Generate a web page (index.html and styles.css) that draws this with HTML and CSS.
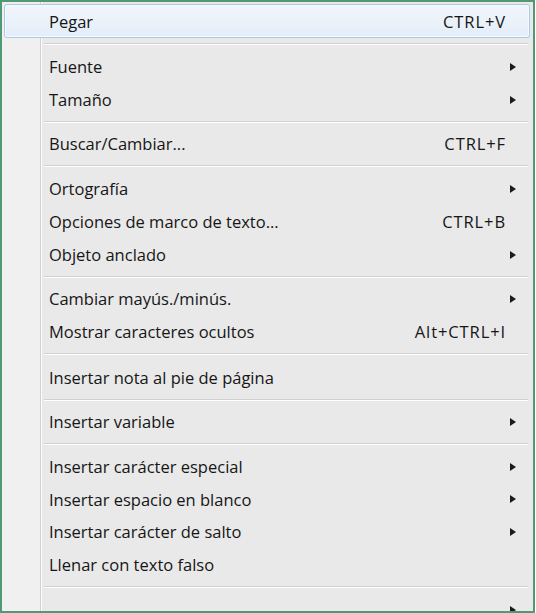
FILE: index.html
```html
<!DOCTYPE html>
<html lang="es">
<head>
<meta charset="utf-8">
<title>Menú contextual</title>
<link rel="stylesheet" href="styles.css">
</head>
<body>
<div class="menu">
  <div class="gutter-line"></div>
  <ul class="items">
    <li class="item hover"><span class="label">Pegar</span><span class="key">CTRL+V</span></li>
    <li class="sep sep-m"></li>
    <li class="item"><span class="label">Fuente</span><span class="arrow"></span></li>
    <li class="item"><span class="label">Tamaño</span><span class="arrow"></span></li>
    <li class="sep sep-s"></li>
    <li class="item"><span class="label">Buscar/Cambiar...</span><span class="key">CTRL+F</span></li>
    <li class="sep sep-m"></li>
    <li class="item"><span class="label">Ortografía</span><span class="arrow"></span></li>
    <li class="item"><span class="label">Opciones de marco de texto...</span><span class="key">CTRL+B</span></li>
    <li class="item"><span class="label">Objeto anclado</span><span class="arrow"></span></li>
    <li class="sep sep-s"></li>
    <li class="item"><span class="label">Cambiar mayús./minús.</span><span class="arrow"></span></li>
    <li class="item"><span class="label">Mostrar caracteres ocultos</span><span class="key">Alt+CTRL+I</span></li>
    <li class="sep sep-l"></li>
    <li class="item"><span class="label">Insertar nota al pie de página</span></li>
    <li class="sep sep-s"></li>
    <li class="item"><span class="label">Insertar variable</span><span class="arrow"></span></li>
    <li class="sep sep-m"></li>
    <li class="item"><span class="label">Insertar carácter especial</span><span class="arrow"></span></li>
    <li class="item short"><span class="label">Insertar espacio en blanco</span><span class="arrow"></span></li>
    <li class="item"><span class="label">Insertar carácter de salto</span><span class="arrow"></span></li>
    <li class="item"><span class="label">Llenar con texto falso</span></li>
    <li class="sep sep-m"></li>
    <li class="item"><span class="label"></span><span class="arrow"></span></li>
  </ul>
</div>
</body>
</html>
```

FILE: styles.css
```css
html, body {
  margin: 0;
  padding: 0;
  background: #ffffff;
}

.menu {
  position: relative;
  box-sizing: border-box;
  width: 535px;
  height: 613px;
  overflow: hidden;
  background: #e9e9e9;
  border: 2px solid #4f9a74;
  font-family: "Open Sans", "Noto Sans", "DejaVu Sans", sans-serif;
  font-size: 16.5px;
  color: #161616;
}

.menu::before {
  content: "";
  position: absolute;
  left: 0;
  top: 0;
  bottom: 0;
  width: 38px;
  background: #f1f0f1;
}

.gutter-line {
  position: absolute;
  left: 38px;
  top: 0;
  bottom: 0;
  width: 1px;
  background: #d2d2d2;
  border-right: 1px solid #fbfbfb;
}

.items {
  position: relative;
  list-style: none;
  margin: 0;
  padding: 2px 3px 0 2px;
}

.item {
  display: flex;
  align-items: center;
  height: 33px;
  padding: 0 12px 0 44px;
  box-sizing: border-box;
  border: 1px solid transparent;
  border-radius: 3px;
}

.item.short {
  height: 32px;
}

.item.hover {
  height: 34px;
  border-color: #a9c8e6;
  background: linear-gradient(#f2f6fb, #e3edf8);
  box-shadow: inset 0 0 0 1px #f7fbff;
}

.label {
  flex: 1;
  white-space: nowrap;
}

.key {
  padding-right: 11px;
  letter-spacing: 0.9px;
  white-space: nowrap;
}

.arrow {
  width: 0;
  height: 0;
  border-top: 4.5px solid transparent;
  border-bottom: 4.5px solid transparent;
  border-left: 6px solid #1b1b1b;
  margin-right: 1px;
}

.sep {
  margin-left: 39px;
  position: relative;
}

.sep-s { height: 11px; }
.sep-m { height: 12px; }
.sep-l { height: 13px; }

.sep::after {
  content: "";
  position: absolute;
  left: 1px;
  right: 2px;
  top: 5px;
  height: 1px;
  background: #d0d0d0;
  border-bottom: 1px solid #ffffff;
}
```
